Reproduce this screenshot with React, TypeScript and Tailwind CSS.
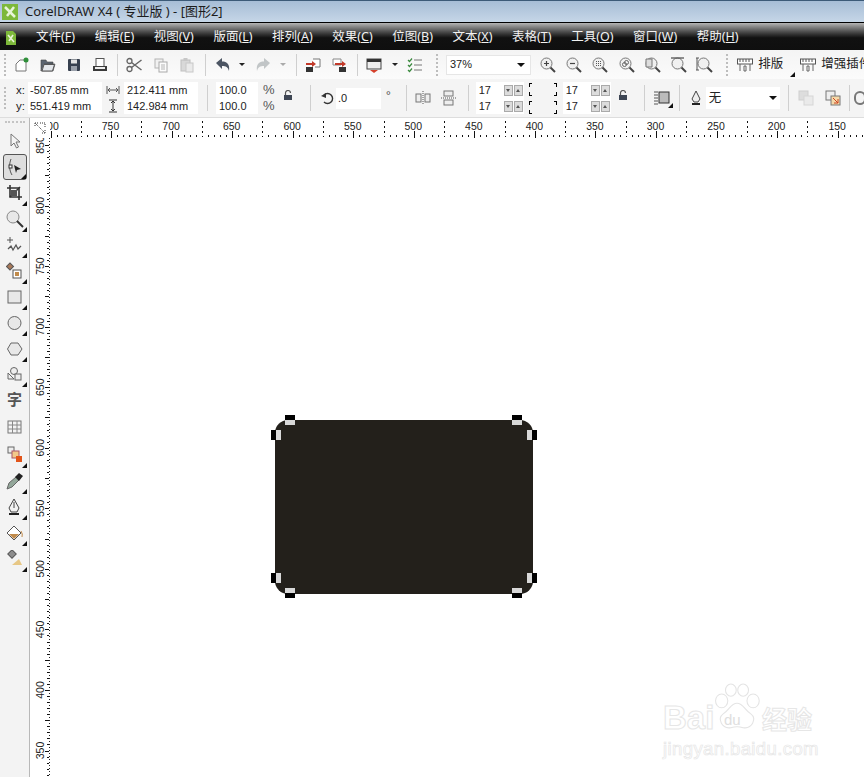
import { type ReactNode } from "react"

const font = "font-['Noto_Sans','Noto_Sans_CJK_SC',sans-serif]"
const uiFont = "font-['Liberation_Sans','Noto_Sans_CJK_SC',sans-serif]"

const menus = [
  ["文件", "F"],
  ["编辑", "E"],
  ["视图", "V"],
  ["版面", "L"],
  ["排列", "A"],
  ["效果", "C"],
  ["位图", "B"],
  ["文本", "X"],
  ["表格", "T"],
  ["工具", "O"],
  ["窗口", "W"],
  ["帮助", "H"],
]

function Ico({ children, className = "" }: { children: ReactNode; className?: string }) {
  return (
    <svg viewBox="0 0 18 18" className={`w-[18px] h-[18px] shrink-0 ${className}`} fill="none">
      {children}
    </svg>
  )
}

function Sep({ className = "" }: { className?: string }) {
  return <div className={`w-px h-[22px] bg-[#cfcfcf] shrink-0 ${className}`} />
}

function Grip() {
  return <div className="w-[2px] h-[22px] shrink-0 border-l-2 border-dotted border-[#bdbdbd]" />
}

function Drop({ light = false }: { light?: boolean }) {
  return (
    <div
      className={`w-0 h-0 shrink-0 border-x-[3px] border-x-transparent border-t-[3px] ${light ? "border-t-[#aaaaaa]" : "border-t-[#222222]"}`}
    />
  )
}

function Corner() {
  return (
    <svg viewBox="0 0 5 5" className="absolute right-0 bottom-0 w-[5px] h-[5px]">
      <path d="M5 0V5H0Z" fill="#111" />
    </svg>
  )
}

function MagIcon({ children }: { children?: ReactNode }) {
  return (
    <Ico>
      <circle cx="7.5" cy="7.5" r="5.5" fill="#f0f0f0" stroke="#777" />
      {children}
      <path d="M11.5 11.5L16 16" stroke="#444" strokeWidth="2" />
    </Ico>
  )
}

function RulerIcon() {
  return (
    <Ico>
      <rect x="1.5" y="3" width="15" height="5" fill="#fff" stroke="#555" />
      <path d="M4 3V6M7 3V6M10 3V6M13 3V6" stroke="#555" />
      <path d="M4 8V15M14 8V15M8 10H10V15H8Z" stroke="#666" />
    </Ico>
  )
}

function TopToolbar() {
  return (
    <div className="h-[29px] flex items-center bg-gradient-to-b from-[#f4f4f4] to-[#fbfbfb] pl-[4px] overflow-hidden">
      <Grip />
      <div className="flex items-center ml-[7px] gap-[8px]">
        <Ico>
          <path d="M3 8L7 4H13V15H3Z" fill="#fff" stroke="#777" />
          <circle cx="13" cy="4" r="2.5" fill="#2f8f3a" />
        </Ico>
        <Ico>
          <path d="M2 15V4H7L8 6H14V8H5L2 15H14L16 8H14" fill="#5a6470" stroke="#444" strokeWidth=".6" />
          <path d="M3 15L5 8.5H15.5L13.5 15Z" fill="#e3e6ea" stroke="#555" />
        </Ico>
        <Ico>
          <rect x="3" y="3" width="12" height="12" rx="1" fill="#37404f" />
          <rect x="6" y="3.5" width="6" height="4" fill="#e4e4e4" />
          <rect x="6" y="10" width="6" height="5" fill="#9aa0aa" />
        </Ico>
        <Ico>
          <rect x="5" y="2.5" width="8" height="8" fill="#fff" stroke="#555" />
          <rect x="2" y="10" width="14" height="5" fill="#3a3a3a" />
          <rect x="4" y="11" width="10" height="2" fill="#eee" />
        </Ico>
      </div>
      <Sep className="ml-[8px]" />
      <div className="flex items-center ml-[7px] gap-[8.5px]">
        <Ico>
          <circle cx="4.5" cy="13" r="2.5" stroke="#666" strokeWidth="1.3" />
          <circle cx="4.5" cy="5" r="2.5" stroke="#666" strokeWidth="1.3" />
          <path d="M6.5 6.5L16.5 14M6.5 11.5L16.5 4" stroke="#666" strokeWidth="1.5" />
        </Ico>
        <Ico className="opacity-60">
          <rect x="3" y="3" width="8" height="9" fill="#eee" stroke="#888" />
          <rect x="7" y="6" width="8" height="10" fill="#fff" stroke="#777" />
          <path d="M9 9H13M9 11H13M9 13H13" stroke="#888" />
        </Ico>
        <Ico className="opacity-50">
          <rect x="3" y="4" width="9" height="11" fill="#bbb" stroke="#888" />
          <rect x="5.5" y="2" width="4" height="3" fill="#999" />
          <rect x="8" y="7" width="7" height="9" fill="#ddd" stroke="#999" />
        </Ico>
      </div>
      <Sep className="ml-[9px]" />
      <div className="flex items-center ml-[8px]">
        <Ico>
          <path d="M2 7L8 2V5.5C13 5.5 16 8 15 15C14 11 12 10 8 10V13Z" fill="#4c5563" />
        </Ico>
        <div className="ml-[7px]">
          <Drop />
        </div>
      </div>
      <div className="flex items-center ml-[9px]">
        <Ico className="opacity-35 -scale-x-100">
          <path d="M2 7L8 2V5.5C13 5.5 16 8 15 15C14 11 12 10 8 10V13Z" fill="#5f6b6f" />
        </Ico>
        <div className="ml-[8px]">
          <Drop light />
        </div>
      </div>
      <Sep className="ml-[10px]" />
      <div className="flex items-center ml-[7px] gap-[8px]">
        <Ico>
          <path d="M9 3H16V11H11" fill="#fff" stroke="#777" />
          <path d="M2 7H8V5L12 8L8 11V9H2Z" fill="#c23a2a" />
          <rect x="2" y="11" width="7" height="5" fill="#333" />
        </Ico>
        <Ico>
          <path d="M3 3H11V9H3Z" fill="#fff" stroke="#888" />
          <path d="M5 7H12V5L16 8L12 11V9H5Z" fill="#c23a2a" />
          <rect x="9" y="11" width="7" height="5" fill="#333" />
        </Ico>
      </div>
      <Sep className="ml-[9px]" />
      <div className="flex items-center ml-[7px]">
        <Ico>
          <rect x="2" y="3" width="14" height="10" fill="#eee" stroke="#444" />
          <rect x="2" y="3" width="14" height="3" fill="#333" />
          <path d="M5 14H13L9 17Z" fill="#d5402b" />
        </Ico>
        <div className="ml-[9px]">
          <Drop />
        </div>
      </div>
      <div className="ml-[8px]">
        <Ico>
          <path d="M8 4H16M8 9H16M8 14H16" stroke="#777" />
          <path d="M2 4L3.5 5.5L6 2.5M2 9L3.5 10.5L6 7.5M2 14L3.5 15.5L6 12.5" stroke="#3b8a3f" strokeWidth="1.2" />
        </Ico>
      </div>
      <div className="ml-[12px]">
        <Grip />
      </div>
      <div className="ml-[8px] w-[85px] h-[20px] bg-white border border-[#e6e6e6] flex items-center justify-between pl-[3px] pr-[5px] shrink-0">
        <span className={`text-[11px] text-[#222] leading-none ${uiFont}`}>37%</span>
        <div className="w-0 h-0 border-x-[4px] border-x-transparent border-t-[4px] border-t-[#111]" />
      </div>
      <div className="flex items-center ml-[8px] gap-[8.2px] shrink-0">
        <MagIcon>
          <path d="M5 7.5H10M7.5 5V10" stroke="#444" strokeWidth="1.2" />
        </MagIcon>
        <MagIcon>
          <path d="M5 7.5H10" stroke="#444" strokeWidth="1.2" />
        </MagIcon>
        <MagIcon>
          <path d="M5 5.5H10M5 7.5H10M5 9.5H10" stroke="#555" strokeDasharray="1 1" />
        </MagIcon>
        <MagIcon>
          <circle cx="6.5" cy="8.5" r="2" stroke="#666" />
          <circle cx="8.5" cy="6.5" r="2" stroke="#666" />
        </MagIcon>
        <MagIcon>
          <path d="M2 3H8V11H2Z" fill="#ddd" stroke="#777" />
        </MagIcon>
        <MagIcon>
          <path d="M1 2H14" stroke="#555" strokeWidth="1.3" />
        </MagIcon>
        <MagIcon>
          <path d="M1 2V14M0 2H3M0 14H3" stroke="#555" />
        </MagIcon>
      </div>
      <div className="ml-[12px]">
        <Grip />
      </div>
      <div className="relative flex items-center ml-[8px] gap-[4px] shrink-0 w-[59px] h-[24px]">
        <RulerIcon />
        <span className="text-[12.5px] text-[#222]">排版</span>
        <Corner />
      </div>
      <div className="flex items-center ml-[4px] gap-[4px] shrink-0">
        <RulerIcon />
        <span className="text-[12.5px] text-[#222] whitespace-nowrap">增强插件</span>
      </div>
    </div>
  )
}

function Field({ text, className = "" }: { text: string; className?: string }) {
  return (
    <div className={`h-[16px] flex items-center bg-white text-[11px] text-[#222] leading-none whitespace-nowrap ${uiFont} ${className}`}>
      {text}
    </div>
  )
}

function Spin({ text }: { text: string }) {
  return (
    <div className={`h-[16px] flex items-center bg-white pl-[3px] w-[48px] text-[11px] text-[#222] leading-none ${uiFont}`}>
      <span className="flex-1">{text}</span>
      <div className="w-[9px] h-[11px] bg-[#dcdcdc] border border-[#aaa] mr-[1px] flex items-center justify-center">
        <div className="w-0 h-0 border-x-[2.5px] border-x-transparent border-t-[3px] border-t-[#555]" />
      </div>
      <div className="w-[9px] h-[11px] bg-[#dcdcdc] border border-[#aaa] mr-[1px] flex items-center justify-center">
        <div className="w-0 h-0 border-x-[2.5px] border-x-transparent border-b-[3px] border-b-[#555]" />
      </div>
    </div>
  )
}

function LockIcon() {
  return (
    <svg viewBox="0 0 10 10" className="w-[10px] h-[10px] shrink-0">
      <path d="M2.5 5V3A2.5 2.5 0 0 1 7.5 3" stroke="#555" fill="none" strokeWidth="1.2" />
      <rect x="1" y="5" width="8" height="5" fill="#3e4654" />
    </svg>
  )
}

function Brackets({ right = false }: { right?: boolean }) {
  const top = right ? "border-r border-t" : "border-l border-t"
  const bottom = right ? "border-r border-b" : "border-l border-b"
  return (
    <div className={`flex flex-col w-[4px] shrink-0 ${right ? "items-end" : ""}`}>
      <div className={`h-[4px] w-[3px] border-black ${top}`} />
      <div className={`h-[4px] w-[3px] mt-[5px] border-black ${bottom}`} />
      <div className={`h-[4px] w-[3px] mt-[5px] border-black ${top}`} />
      <div className={`h-[4px] w-[3px] mt-[5px] border-black ${bottom}`} />
    </div>
  )
}

function PropBar() {
  return (
    <div className="h-[39px] flex items-center bg-[#f4f4f4] pl-[4px] overflow-hidden border-b border-[#dddddd]">
      <Grip />
      <div className={`flex flex-col ml-[10px] w-[12px] text-[11.5px] leading-[16px] text-[#222] shrink-0 ${uiFont}`}>
        <span>x:</span>
        <span>y:</span>
      </div>
      <div className="flex flex-col w-[74px] shrink-0">
        <Field text="-507.85 mm" className="pl-[2px]" />
        <Field text="551.419 mm" className="pl-[2px]" />
      </div>
      <div className="flex flex-col w-[22px] items-center shrink-0 gap-[2px]">
        <svg viewBox="0 0 14 14" className="w-[14px] h-[14px]">
          <path d="M1 3V11M13 3V11M2 7H12M4 5L2 7L4 9M10 5L12 7L10 9" stroke="#555" fill="none" />
        </svg>
        <svg viewBox="0 0 14 14" className="w-[14px] h-[14px]">
          <path d="M3 1H11M3 13H11M7 2V12M5 4L7 2L9 4M5 10L7 12L9 10" stroke="#333" fill="none" />
        </svg>
      </div>
      <div className="flex flex-col w-[74px] shrink-0">
        <Field text="212.411 mm" className="pl-[3px]" />
        <Field text="142.984 mm" className="pl-[3px]" />
      </div>
      <Sep className="ml-[9px] h-[26px]" />
      <div className="flex flex-col w-[42px] ml-[8px] shrink-0">
        <Field text="100.0" className="pl-[3px]" />
        <Field text="100.0" className="pl-[3px]" />
      </div>
      <div className={`flex flex-col w-[20px] pl-[5px] text-[13px] leading-[16px] text-[#555] shrink-0 ${uiFont}`}>
        <span>%</span>
        <span>%</span>
      </div>
      <div className="ml-[5px] -mt-[6px]">
        <LockIcon />
      </div>
      <Sep className="ml-[17px] h-[26px]" />
      <div className="ml-[9px] shrink-0">
        <svg viewBox="0 0 14 14" className="w-[14px] h-[14px]">
          <path d="M4 4A5 5 0 1 1 4 11" stroke="#333" fill="none" strokeWidth="1.4" />
          <path d="M1 5L6 2V7Z" fill="#333" />
        </svg>
      </div>
      <Field text=".0" className="w-[45px] !h-[21px] ml-[2px] pl-[2px] shrink-0" />
      <span className="ml-[5px] w-[6px] text-[11px] text-[#555] self-center -mt-[6px]">°</span>
      <Sep className="ml-[15px] h-[26px]" />
      <div className="flex items-center ml-[7px] gap-[8px]">
        <Ico>
          <rect x="2" y="5" width="5" height="8" stroke="#777" fill="#eee" />
          <rect x="11" y="5" width="5" height="8" stroke="#777" fill="#eee" />
          <path d="M9 2V16" stroke="#555" strokeDasharray="1 1" />
        </Ico>
        <Ico>
          <rect x="4" y="2" width="9" height="5" stroke="#777" fill="#eee" />
          <rect x="4" y="11" width="9" height="5" stroke="#777" fill="#eee" />
          <path d="M1 9H17" stroke="#555" strokeDasharray="1 1" />
        </Ico>
      </div>
      <Sep className="ml-[10px] h-[26px]" />
      <div className="flex flex-col ml-[7px] shrink-0">
        <Spin text="17" />
        <Spin text="17" />
      </div>
      <div className="ml-[5px]">
        <Brackets />
      </div>
      <div className="ml-[20px] mr-[6px]">
        <Brackets right />
      </div>
      <div className="flex flex-col shrink-0">
        <Spin text="17" />
        <Spin text="17" />
      </div>
      <div className="ml-[7px] -mt-[6px]">
        <LockIcon />
      </div>
      <Sep className="ml-[16px] h-[26px]" />
      <div className="relative ml-[8px] w-[20px] h-[20px] flex items-center justify-center shrink-0">
        <Ico>
          <path d="M0 3H4M0 6H4M0 9H4M0 12H4M0 15H4" stroke="#555" />
          <rect x="5" y="3" width="10" height="11" fill="#bbb" stroke="#333" />
        </Ico>
        <Corner />
      </div>
      <Sep className="ml-[6px] h-[26px]" />
      <div className="ml-[9px] w-[14px] shrink-0">
        <svg viewBox="0 0 14 16" className="w-[14px] h-[16px]">
          <path d="M7 1L11 9L9 12H5L3 9Z" fill="#eee" stroke="#444" />
          <path d="M3 14H11" stroke="#222" strokeWidth="2" />
        </svg>
      </div>
      <div className="ml-[3px] w-[74px] h-[22px] bg-white flex items-center justify-between pl-[3px] pr-[3px] shrink-0">
        <span className="text-[12.5px] text-[#222]">无</span>
        <div className="w-0 h-0 border-x-[4px] border-x-transparent border-t-[4px] border-t-[#111]" />
      </div>
      <Sep className="ml-[8px] h-[26px]" />
      <div className="flex items-center ml-[8px] gap-[9px]">
        <Ico className="opacity-40">
          <rect x="2" y="2" width="9" height="9" fill="#bbb" stroke="#999" />
          <rect x="7" y="7" width="9" height="9" fill="#ddd" stroke="#aaa" />
        </Ico>
        <Ico>
          <rect x="2" y="2" width="9" height="9" fill="#eee" stroke="#777" />
          <rect x="7" y="7" width="9" height="9" fill="#f5d9a8" stroke="#777" />
          <path d="M9 9L14 14M14 10V14H10" stroke="#cc4422" />
        </Ico>
      </div>
      <Sep className="ml-[7px] h-[26px]" />
      <div className="ml-[4px] w-[12px] h-[14px] rounded-full border-2 border-[#777] shrink-0" />
    </div>
  )
}

function ToolSlot({ children, corner = true, active = false, h = "h-[26px]" }: { children: ReactNode; corner?: boolean; active?: boolean; h?: string }) {
  return (
    <div className={`relative w-[24px] ${h} flex items-center justify-center ${active ? "border border-[#555] rounded-[3px] bg-[#dedede]" : ""}`}>
      {children}
      {corner && <Corner />}
    </div>
  )
}

function ToolBox() {
  return (
    <div className="w-[30px] shrink-0 bg-[#f3f3f3] border-r border-[#b8b8b8] flex flex-col items-center pt-[3px]">
      <div className="w-[20px] h-0 border-t-2 border-dotted border-[#c4c4c4] mb-[5px]" />
      <ToolSlot corner={false}>
        <Ico>
          <path d="M5 2V14L8 11L10.5 16L12.5 15L10 10H14Z" fill="#f4f4f4" stroke="#777" />
        </Ico>
      </ToolSlot>
      <ToolSlot active>
        <Ico>
          <path d="M5 1C3 6 3 12 6 17" stroke="#555" />
          <rect x="3" y="7" width="3" height="3" fill="#fff" stroke="#333" />
          <path d="M8 7L15 11L11 12L10 15Z" fill="#222" />
        </Ico>
      </ToolSlot>
      <ToolSlot>
        <Ico>
          <path d="M4 1V13H16M1 4H13V16" stroke="#333" strokeWidth="1.6" />
          <path d="M4 13L14 3" stroke="#333" strokeWidth="1.4" />
          <rect x="5" y="6" width="6" height="6" fill="#555" />
        </Ico>
      </ToolSlot>
      <ToolSlot>
        <Ico>
          <circle cx="7" cy="7" r="6" fill="#e8e8e8" stroke="#888" />
          <path d="M11 11L17 17" stroke="#333" strokeWidth="2" />
        </Ico>
      </ToolSlot>
      <ToolSlot>
        <Ico>
          <path d="M4 1V7M1 4H7" stroke="#555" />
          <path d="M2 13L5 10L7 14L10 9L12 13L15 10" stroke="#555" strokeWidth="1.3" />
        </Ico>
      </ToolSlot>
      <ToolSlot>
        <Ico>
          <rect x="1.5" y="2" width="5" height="5" transform="rotate(45 4 4.5)" fill="#a8795a" stroke="#555" />
          <rect x="7" y="8" width="8" height="8" fill="#fff" stroke="#555" />
          <rect x="9" y="10" width="4" height="4" fill="#c08a4a" />
        </Ico>
      </ToolSlot>
      <ToolSlot>
        <Ico>
          <rect x="2" y="3" width="13" height="12" fill="#e8e8e8" stroke="#666" />
        </Ico>
      </ToolSlot>
      <ToolSlot>
        <Ico>
          <circle cx="8.5" cy="9" r="6.5" fill="#e8e8e8" stroke="#666" />
        </Ico>
      </ToolSlot>
      <ToolSlot>
        <Ico>
          <path d="M5 3H12L16 9L12 15H5L1.5 9Z" fill="#e8e8e8" stroke="#666" />
        </Ico>
      </ToolSlot>
      <ToolSlot h="h-[25px]">
        <Ico>
          <circle cx="8" cy="5" r="3.5" fill="#eee" stroke="#666" />
          <path d="M2 7L8 13H2Z" fill="#eee" stroke="#666" />
          <rect x="9" y="8" width="6" height="6" fill="#eee" stroke="#666" />
        </Ico>
      </ToolSlot>
      <ToolSlot corner={false} h="h-[25px]">
        <span className="text-[15px] font-semibold leading-none text-[#555]">字</span>
      </ToolSlot>
      <ToolSlot corner={false} h="h-[30px]">
        <Ico>
          <rect x="2" y="3" width="13" height="12" fill="#f3f3f3" stroke="#777" />
          <path d="M2 7H15M2 11H15M6.5 3V15M11 3V15" stroke="#888" />
        </Ico>
      </ToolSlot>
      <ToolSlot>
        <Ico>
          <rect x="2" y="1" width="6" height="6" fill="#eee" stroke="#666" />
          <rect x="6" y="5" width="7" height="7" fill="#f2c98a" stroke="#a56" />
          <rect x="10" y="10" width="6" height="6" fill="#e2541a" />
        </Ico>
      </ToolSlot>
      <ToolSlot>
        <Ico>
          <path d="M1 17L3 11L10 5L13 8L6 15Z" fill="#93a79a" stroke="#666" />
          <path d="M9 5L13 1L17 4L13 9Z" fill="#222" />
        </Ico>
      </ToolSlot>
      <ToolSlot>
        <Ico>
          <path d="M8 1L13 10L11 14H5L3 10Z" fill="#f1f1f1" stroke="#444" />
          <path d="M8 4V10" stroke="#444" />
          <path d="M3 16H13" stroke="#222" strokeWidth="2" />
        </Ico>
      </ToolSlot>
      <ToolSlot>
        <Ico>
          <path d="M1 9L8 2L15 9L8 16Z" fill="#fff" stroke="#555" />
          <path d="M3 10H13L8 15Z" fill="#c08a4a" />
          <path d="M15 7Q17 10 16 13" stroke="#c08a4a" />
        </Ico>
      </ToolSlot>
      <ToolSlot>
        <Ico>
          <rect x="3" y="1" width="6" height="6" transform="rotate(45 6 4)" fill="#8d8d8d" stroke="#555" />
          <path d="M6 15L13 9L16 15Z" fill="#e7c785" />
        </Ico>
      </ToolSlot>
    </div>
  )
}

const hMarks = [800, 750, 700, 650, 600, 550, 500, 450, 400, 350, 300, 250, 200, 150]
const vMarks = [850, 800, 750, 700, 650, 600, 550, 500, 450, 400, 350]
const pxPer50 = 60.55

function HRuler() {
  const minor = Array.from({ length: 140 }, (_, i) => i)
  return (
    <svg className="block w-[814px] h-[20px] shrink-0" viewBox="0 0 814 20">
      {minor.map((i) => {
        const x = Math.round(0.5 + (i * pxPer50) / 10)
        if (i % 10 === 0) return <rect key={i} x={x} y={13} width={1} height={7} fill="#111" />
        if (i % 5 === 0) return <path key={i} d={`M${x + 0.5} 3V19`} stroke="#111" strokeDasharray="2 3" />
        return <rect key={i} x={x} y={17} width={1} height={2} fill="#111" />
      })}
      {hMarks.map((m, i) => (
        <text key={m} x={i * pxPer50} y={12} textAnchor="middle" fontSize="10.5" fill="#222" fontFamily="'Liberation Sans',sans-serif">
          {m}
        </text>
      ))}
    </svg>
  )
}

function VRuler() {
  const minor = Array.from({ length: 110 }, (_, i) => i)
  return (
    <svg className="block w-[20px] h-[639px] shrink-0" viewBox="0 0 20 639">
      {minor.map((i) => (
        <rect key={i} x={i % 5 === 0 ? 15 : 17} y={Math.round(7 + (i * pxPer50) / 10)} width={i % 5 === 0 ? 4 : 2} height={1} fill="#111" />
      ))}
      {vMarks.map((m, i) => (
        <text key={m} transform={`translate(14 ${7 + i * pxPer50}) rotate(-90)`} textAnchor="middle" fontSize="10.5" fill="#222" fontFamily="'Liberation Sans',sans-serif">
          {m}
        </text>
      ))}
      <path d="M19.5 0V639" stroke="#222" strokeDasharray="1 2" />
    </svg>
  )
}

function Handle({ className }: { className: string }) {
  return <div className={`absolute ${className}`} />
}

function Watermark() {
  const stroke = "text-white [-webkit-text-stroke:1px_#e6e6e6]"
  return (
    <div className="absolute left-[613px] top-[566px] w-[155px] pointer-events-none select-none">
      <svg viewBox="0 0 60 62" className="absolute left-[51px] top-[-21px] w-[46px] h-[48px]" fill="#fff" stroke="#e4e4e4" strokeWidth="1.4">
        <ellipse cx="10" cy="23" rx="8" ry="9" />
        <ellipse cx="22" cy="9" rx="7" ry="8" />
        <ellipse cx="38" cy="9" rx="7" ry="8" />
        <ellipse cx="51" cy="23" rx="8" ry="9" />
        <path d="M30 26C22 26 20 35 12 40C4 46 10 60 22 58C28 56 32 56 38 58C50 60 56 46 48 40C40 35 38 26 30 26Z" />
      </svg>
      <div className="relative flex items-end h-[30px] leading-none">
        <span className={`font-['Liberation_Sans',sans-serif] text-[33px] font-bold ${stroke}`}>Bai</span>
        <span className="absolute left-[61px] top-[8px] font-['Liberation_Sans',sans-serif] text-[15px] text-[#dedede] leading-none">du</span>
        <span className={`absolute left-[99px] top-[3px] text-[25px] font-bold ${stroke}`}>经验</span>
      </div>
      <div className="font-['Liberation_Sans',sans-serif] text-[18.5px] leading-none mt-[6px] text-white [-webkit-text-stroke:0.7px_#e6e6e6] tracking-[0.4px] whitespace-nowrap">
        jingyan.baidu.com
      </div>
    </div>
  )
}

function Canvas() {
  return (
    <div className="relative flex-1 bg-white overflow-hidden">
      {/* selected shape sits at its own spot on the page */}
      <div className="absolute left-[225px] top-[282px] w-[258px] h-[174px] bg-[#23201b] rounded-[13px]" />
      <Handle className="left-[235px] top-[277px] w-[10px] h-[5px] bg-black" />
      <Handle className="left-[235px] top-[282px] w-[10px] h-[5px] bg-[#d8d8d8]" />
      <Handle className="left-[462px] top-[277px] w-[10px] h-[5px] bg-black" />
      <Handle className="left-[462px] top-[282px] w-[10px] h-[5px] bg-[#d8d8d8]" />
      <Handle className="left-[221px] top-[292px] w-[5px] h-[10px] bg-black" />
      <Handle className="left-[226px] top-[292px] w-[5px] h-[10px] bg-[#d8d8d8]" />
      <Handle className="left-[482px] top-[292px] w-[5px] h-[10px] bg-black" />
      <Handle className="left-[477px] top-[292px] w-[5px] h-[10px] bg-[#d8d8d8]" />
      <Handle className="left-[221px] top-[435px] w-[5px] h-[10px] bg-black" />
      <Handle className="left-[226px] top-[435px] w-[5px] h-[10px] bg-[#d8d8d8]" />
      <Handle className="left-[482px] top-[435px] w-[5px] h-[10px] bg-black" />
      <Handle className="left-[477px] top-[435px] w-[5px] h-[10px] bg-[#d8d8d8]" />
      <Handle className="left-[235px] top-[455px] w-[10px] h-[5px] bg-black" />
      <Handle className="left-[235px] top-[450px] w-[10px] h-[5px] bg-[#d8d8d8]" />
      <Handle className="left-[462px] top-[455px] w-[10px] h-[5px] bg-black" />
      <Handle className="left-[462px] top-[450px] w-[10px] h-[5px] bg-[#d8d8d8]" />
      <Watermark />
    </div>
  )
}

export default function App() {
  return (
    <div className={`w-[864px] h-[777px] flex flex-col overflow-hidden bg-white ${font}`}>
      <div className="h-[22px] shrink-0 flex items-center gap-[7px] pl-[2px] border-t border-[#3c5a78] bg-gradient-to-b from-[#a6bdd6] to-[#c6d6e7]">
        <svg viewBox="0 0 16 16" className="w-[16px] h-[16px] shrink-0">
          <rect width="16" height="16" fill="#7db83a" />
          <path d="M3 3L13 13M12 3L5 12" stroke="#e8f4d8" strokeWidth="2.5" />
        </svg>
        <span className="text-[13px] text-[#1c1c1c] leading-none whitespace-nowrap">CorelDRAW X4 ( 专业版 ) - [图形2]</span>
      </div>
      <div className="h-[28px] shrink-0 flex items-center pl-[5px] pt-[2px] border-t border-black bg-gradient-to-b from-[#b5b5b5] via-[#111111] via-55% to-[#0f0f0f]">
        <svg viewBox="0 0 12 16" className="w-[12px] h-[16px] shrink-0 mr-[19px]">
          <path d="M1 1H8L11 4V15H1Z" fill="#7db83a" />
          <path d="M3 5L9 12M8 5L4 11" stroke="#eaf5d8" strokeWidth="1.6" />
        </svg>
        <div className="flex items-center gap-[19.6px]">
          {menus.map(([label, key]) => (
            <span key={key} className="text-[12.5px] text-[#f2f2f2] leading-none whitespace-nowrap">
              {label}(<span className="underline">{key}</span>)
            </span>
          ))}
        </div>
      </div>
      <TopToolbar />
      <PropBar />
      <div className="flex flex-1 min-h-0">
        <ToolBox />
        <div className="flex-1 flex flex-col min-w-0">
          <div className="h-[20px] flex shrink-0 bg-white">
            <div className="w-[20px] h-[20px] shrink-0 flex items-center justify-center">
              <svg viewBox="0 0 14 14" className="w-[14px] h-[14px]">
                <path d="M2 2H6M2 2V6M12 12H8M12 12V8M3 3L11 11M7 2H12V7" stroke="#333" fill="none" strokeDasharray="1 1" />
              </svg>
            </div>
            <HRuler />
          </div>
          <div className="flex flex-1 min-h-0">
            <VRuler />
            <Canvas />
          </div>
        </div>
      </div>
    </div>
  )
}
